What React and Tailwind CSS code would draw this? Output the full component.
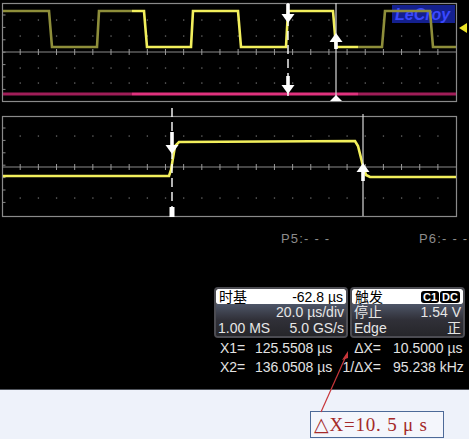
import React from "react";

function ticks(step, x0, x1) {
  const out = [];
  for (let x = x0; x <= x1; x += step) out.push(x);
  return out;
}

function Grid({ top, bottom, mid, dotRows }) {
  const xs = ticks(18.16, 20.2, 452);
  const ys = [];
  for (let y = top + 12; y < bottom - 4; y += 12.4) ys.push(y);
  return (
    <g>
      <rect x="2.5" y={top + 0.5} width="454" height={bottom - top} fill="none" stroke="#8a8a8a" strokeWidth="1.2" />
      <line x1="2.5" y1={mid} x2="456.5" y2={mid} stroke="#8a8a8a" strokeWidth="1" />
      {xs.map((x) => (
        <line key={"t" + x} x1={x} y1={mid - 3} x2={x} y2={mid + 3} stroke="#9a9a9a" strokeWidth="1" />
      ))}
      {ys.map((y) => (
        <line key={"l" + y} x1="2.5" y1={y} x2="5.5" y2={y} stroke="#8a8a8a" strokeWidth="1" />
      ))}
      {dotRows.map((y) =>
        xs.map((x) => <rect key={"d" + y + x} x={x - 0.6} y={y - 0.6} width="1.3" height="1.3" fill="#6a6a6a" />)
      )}
    </g>
  );
}

function DownArrow({ x, y0, y1 }) {
  return (
    <g fill="#ffffff">
      <rect x={x - 1.8} y={y0} width="3.6" height={y1 - y0 - 8} />
      <polygon points={`${x - 6.5},${y1 - 9} ${x + 6.5},${y1 - 9} ${x},${y1}`} />
    </g>
  );
}

function UpArrow({ x, y0, y1 }) {
  return (
    <g fill="#ffffff">
      <polygon points={`${x - 6.5},${y0 + 9} ${x + 6.5},${y0 + 9} ${x},${y0}`} />
      <rect x={x - 1.8} y={y0 + 8} width="3.6" height={y1 - y0 - 8} />
    </g>
  );
}

function TopScope() {
  return (
    <svg width="469" height="105" viewBox="0 0 469 105" className="block shrink-0">
      <defs>
        <linearGradient id="yl" gradientUnits="userSpaceOnUse" x1="0" y1="0" x2="469" y2="0">
          <stop offset="0" stopColor="#8e8e3a" />
          <stop offset="0.281" stopColor="#8e8e3a" />
          <stop offset="0.281" stopColor="#f2ef5c" />
          <stop offset="0.763" stopColor="#f2ef5c" />
          <stop offset="0.763" stopColor="#8e8e3a" />
          <stop offset="1" stopColor="#8e8e3a" />
        </linearGradient>
        <linearGradient id="mg" gradientUnits="userSpaceOnUse" x1="0" y1="0" x2="469" y2="0">
          <stop offset="0" stopColor="#a01d58" />
          <stop offset="0.281" stopColor="#a01d58" />
          <stop offset="0.281" stopColor="#e0327e" />
          <stop offset="0.763" stopColor="#e0327e" />
          <stop offset="0.763" stopColor="#a01d58" />
          <stop offset="1" stopColor="#a01d58" />
        </linearGradient>
      </defs>
      <Grid top={3} bottom={101} mid={52} dotRows={[20, 36, 68, 83]} />
      <rect x="392" y="5" width="63" height="18" fill="#14208e" />
      <text x="395" y="20" fill="#3a48ff" fontSize="16" fontStyle="italic" fontWeight="bold" fontFamily="Liberation Sans, Arial, sans-serif">
        LeCroy
      </text>
      <path
        d="M3,11 L49,11 L52,47 L97,47 L99,11 L144,11 L147,47 L191,47 L193,11 L238,11 L241,47 L286,47 L288,11 L333,11 L336,47 L382,47 L385,11 L430,11 L433,47 L456,47"
        fill="none"
        stroke="url(#yl)"
        strokeWidth="2.6"
      />
      <line x1="3" y1="94" x2="456" y2="94" stroke="url(#mg)" strokeWidth="3.2" />
      <line x1="288" y1="3" x2="288" y2="101" stroke="#ffffff" strokeWidth="1.4" strokeDasharray="9 5" />
      <line x1="336" y1="3" x2="336" y2="101" stroke="#d8d8d8" strokeWidth="1.2" />
      <DownArrow x={288} y0={4} y1={23} />
      <DownArrow x={288} y0={76} y1={94} />
      <UpArrow x={336} y0={33} y1={49} />
      <polygon points="330,101 342,101 336,95" fill="#ffffff" />
      <polygon points="459,28 467,23 467,33" fill="#ece326" />
    </svg>
  );
}

function BottomScope() {
  return (
    <svg width="469" height="120" viewBox="0 105 469 120" className="block shrink-0">
      <Grid top={116} bottom={216} mid={167} dotRows={[136, 198]} />
      <path
        d="M3,176 L169,176 L171,170 L175,146 L179,142 L355,141 L358,146 L363,166 L366,175 L370,177 L456,177"
        fill="none"
        stroke="#f2ef5c"
        strokeWidth="2.6"
      />
      <line x1="172" y1="108" x2="172" y2="216" stroke="#ffffff" strokeWidth="1.4" strokeDasharray="9 5" />
      <line x1="363" y1="114" x2="363" y2="216" stroke="#d8d8d8" strokeWidth="1.2" />
      <DownArrow x={172} y0={132} y1={154} />
      <rect x="169.5" y="207" width="5" height="10" fill="#ffffff" />
      <UpArrow x={363} y0={163} y1={181} />
    </svg>
  );
}

function Badge({ children }) {
  return (
    <span className="bg-black text-white text-[11px] leading-[12px] font-bold px-[2px] rounded-[3px]">{children}</span>
  );
}

function InfoBox({ width, head, headRight, rows }) {
  return (
    <div
      className="flex flex-col shrink-0 h-[51px] rounded-[4px] border-[2px] border-[#4c4c52] bg-[#26262a] overflow-hidden"
      style={{ width }}
    >
      <div className="h-[15px] bg-white rounded-[2px] flex items-center justify-between px-[3px] text-black text-[14px] leading-none whitespace-nowrap">
        <span>{head}</span>
        {headRight}
      </div>
      <div className="flex-1 flex flex-col bg-gradient-to-b from-[#4e5668] via-[#303038] to-[#26262a] text-[#e6e6e6] text-[14px] leading-[16px] px-[2px] whitespace-nowrap">
        {rows.map((r, i) => (
          <div key={i} className="flex justify-between h-[16px]">
            <span>{r[0]}</span>
            <span>{r[1]}</span>
          </div>
        ))}
      </div>
    </div>
  );
}

export default function App() {
  const cjk = "font-['Liberation_Sans','Noto_Sans_CJK_SC',sans-serif]";
  return (
    <div className={`relative w-[469px] h-[439px] overflow-hidden bg-[#eef2fa] ${cjk}`}>
      <div className="h-[390px] bg-black flex flex-col border-b border-[#50545c]">
        <TopScope />
        <BottomScope />
        <div className="h-[62px] shrink-0 flex pt-[7px] text-[13px] leading-[13px] tracking-[1.2px] text-[#8c8c8c] whitespace-nowrap">
          <span className="ml-[281px] w-[138px]">P5:- - -</span>
          <span>P6:- - -</span>
        </div>
        <div className="flex gap-[2px] ml-[214px]">
          <InfoBox
            width="134px"
            head="时基"
            headRight={<span>-62.8 µs</span>}
            rows={[
              ["", "20.0 µs/div"],
              ["1.00 MS", "5.0 GS/s"],
            ]}
          />
          <InfoBox
            width="115px"
            head="触发"
            headRight={
              <span className="flex gap-[1px]">
                <Badge>C1</Badge>
                <Badge>DC</Badge>
              </span>
            }
            rows={[
              ["停止", "1.54 V"],
              ["Edge", "正"],
            ]}
          />
        </div>
        <div className="flex flex-col mt-[1px] text-[14px] leading-[19px] text-[#e2e2e2] whitespace-nowrap">
          <div className="flex ml-[220px]">
            <span className="w-[35px]">X1=</span>
            <span className="w-[80px]">125.5508 µs</span>
            <span className="w-[46px] text-right">ΔX=</span>
            <span className="pl-[12px]">10.5000 µs</span>
          </div>
          <div className="flex ml-[220px]">
            <span className="w-[35px]">X2=</span>
            <span className="w-[80px]">136.0508 µs</span>
            <span className="w-[46px] text-right">1/ΔX=</span>
            <span className="pl-[12px]">95.238 kHz</span>
          </div>
        </div>
      </div>
      <div className="pt-[21px] pl-[310px]">
        <div className="w-[134px] h-[27px] border border-[#4d6a98] bg-[#f4f6fc] flex items-center px-[3px] text-[#a42a2a] text-[19px] leading-none font-['Liberation_Serif','DejaVu_Serif',serif] tracking-[0.8px] whitespace-nowrap">
          △X=10. 5 μ s
        </div>
      </div>
      <svg className="absolute inset-0 pointer-events-none" width="469" height="439">
        <line x1="321" y1="412" x2="346" y2="356" stroke="#c8363a" strokeWidth="1.2" />
        <polygon points="348,351 342,360 348,358" fill="#c8363a" />
      </svg>
    </div>
  );
}
